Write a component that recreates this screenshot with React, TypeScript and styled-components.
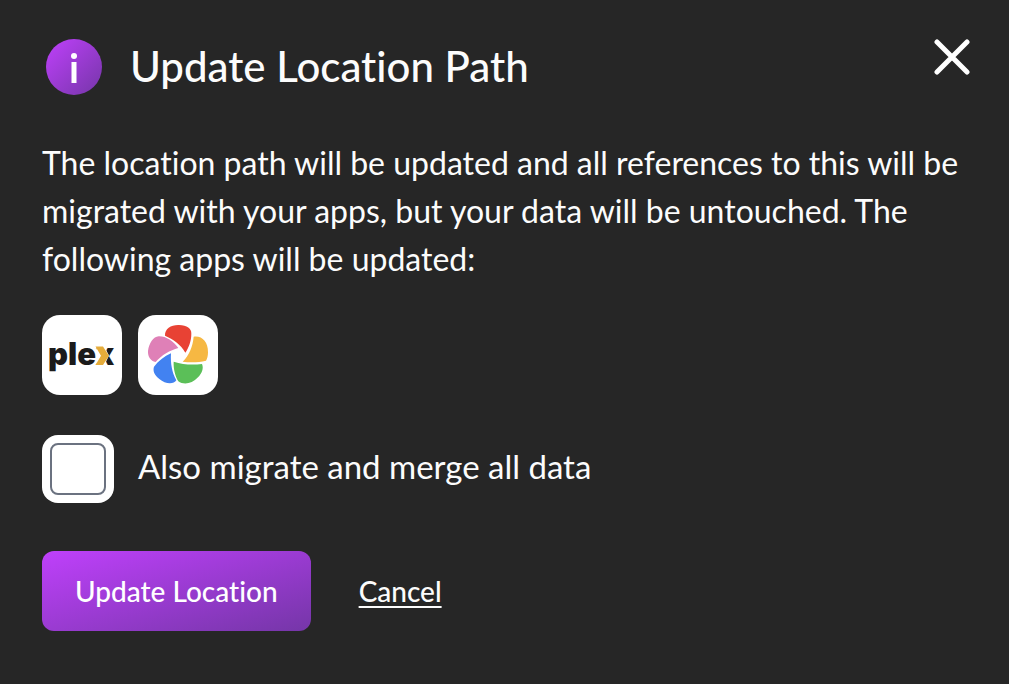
import React from "react";
import styled, { createGlobalStyle } from "styled-components";

const GlobalStyle = createGlobalStyle`
  *, *::before, *::after { box-sizing: border-box; }
  body {
    margin: 0;
    background: #262626;
    color: #fcfcfc;
    font-family: Lato, "Liberation Sans", sans-serif;
    font-variant-ligatures: none;
  }
  h1, p { margin: 0; }
  button { border: 0; padding: 0; background: none; color: inherit; font: inherit; cursor: pointer; }
`;

const accent = "linear-gradient(to bottom right, #bf40fb, #7536a8)";

const Dialog = styled.main`
  display: flex;
  flex-direction: column;
  min-height: 100vh;
  padding: 39px 42px 53px;
  background: #262626;
`;

const Header = styled.header`
  display: flex;
  align-items: center;
  gap: 28px;
  padding-left: 4px;
  margin-bottom: 44px;
`;

const InfoBadge = styled.span`
  display: flex;
  flex: none;
  width: 56px;
  height: 56px;
  border-radius: 50%;
  background: ${accent};
`;

const Title = styled.h1`
  flex: 1;
  font-size: 42px;
  line-height: 54px;
  padding-bottom: 2px;
  font-weight: 500;
`;

const CloseButton = styled.button`
  display: flex;
  align-self: flex-start;
  margin-right: -3px;
`;

const Description = styled.p`
  font-size: 32px;
  line-height: 48px;
  margin-bottom: 32px;
`;

const AppList = styled.div`
  display: flex;
  gap: 16px;
  margin-bottom: 40px;
`;

const AppTile = styled.div`
  display: flex;
  width: 80px;
  height: 80px;
  border-radius: 18px;
  background: #fff;
  overflow: hidden;
`;

const CheckLabel = styled.label`
  display: flex;
  align-items: center;
  align-self: flex-start;
  gap: 24px;
  margin-bottom: 48px;
  font-size: 33px;
  line-height: 48px;
`;

const CheckText = styled.span`
  padding-bottom: 6px;
`;

const CheckFrame = styled.span`
  display: flex;
  padding: 8px;
  border-radius: 16px;
  background: #fff;
`;

const Checkbox = styled.input`
  appearance: none;
  width: 56px;
  height: 52px;
  margin: 0;
  border: 2px solid #6b7280;
  border-radius: 8px;
  background: #fff;
  &:checked { background: #9a3ad2; }
`;

const Actions = styled.div`
  display: flex;
  align-items: center;
  gap: 48px;
`;

const PrimaryButton = styled.button`
  height: 80px;
  padding: 0 33px;
  border-radius: 12px;
  background: ${accent};
  color: #fff;
  font-size: 28px;
  line-height: 40px;
  font-weight: 500;
`;

const TextButton = styled.button`
  font-size: 28px;
  line-height: 40px;
  font-weight: 500;
  text-decoration: underline;
  text-decoration-thickness: 2px;
  text-underline-offset: 4px;
`;

function PlexLogo() {
  return (
    <svg width="80" height="80" viewBox="0 0 80 80" role="img" aria-label="Plex">
      <text x="6" y="50" fontFamily="Inter, sans-serif" fontWeight="900" fontSize="31" fill="#1b1b1b">
        plex
      </text>
      <path d="M54.500 31H62L67 40.500L62 51H54.500z" fill="#fff" />
      <path d="M53.500 31.500H61L67 40.800L61 50H53.500L59 40.800z" fill="#e5ac3a" />
    </svg>
  );
}

function PinwheelLogo() {
  return (
    <svg width="80" height="80" viewBox="24 30 240 240" role="img" aria-label="Photos">
      <path fill="#e84234" d="M105 92C104 71 124 59 147 60C171 60 185 71 184 86C184 108 176 129 166 143C152 118 130 103 105 92Z" />
      <path fill="#f6b843" d="M158 170C178 150 188 125 191 95C215 91 235 110 234 142C234 152 232 162 228 167C205 173 180 173 158 170Z" />
      <path fill="#5bbf58" d="M131 170C160 180 190 180 216 177C222 190 215 206 204 217C185 238 160 240 145 229C135 213 130 190 131 170Z" />
      <path fill="#4282f1" d="M123 145C121 175 126 203 139 226C131 239 105 237 88 222C73 210 68 198 72 185C85 168 103 154 123 145Z" />
      <path fill="#df80b7" d="M145 129C120 136 95 150 77 171C62 168 53 155 54 138C57 115 70 95 86 94C107 93 130 108 145 129Z" />
    </svg>
  );
}

export default function App() {
  return (
    <>
      <GlobalStyle />
      <Dialog>
        <Header>
          <InfoBadge>
            <svg width="56" height="56" viewBox="0 0 56 56" aria-hidden="true">
              <circle cx="28" cy="17" r="3" fill="#fff" />
              <rect x="25.500" y="23" width="5" height="21" fill="#fff" />
            </svg>
          </InfoBadge>
          <Title>Update Location Path</Title>
          <CloseButton type="button" aria-label="Close">
            <svg width="36" height="36" viewBox="0 0 36 36" fill="none" stroke="#fff" strokeWidth="5" strokeLinecap="round">
              <path d="M3 3L33 33M33 3L3 33" />
            </svg>
          </CloseButton>
        </Header>
        <Description>
          The location path will be updated and all references to this will be migrated with your apps, but your data
          will be untouched. The following apps will be updated:
        </Description>
        <AppList>
          <AppTile>
            <PlexLogo />
          </AppTile>
          <AppTile>
            <PinwheelLogo />
          </AppTile>
        </AppList>
        <CheckLabel>
          <CheckFrame>
            <Checkbox type="checkbox" />
          </CheckFrame>
          <CheckText>Also migrate and merge all data</CheckText>
        </CheckLabel>
        <Actions>
          <PrimaryButton type="button">Update Location</PrimaryButton>
          <TextButton type="button">Cancel</TextButton>
        </Actions>
      </Dialog>
    </>
  );
}
